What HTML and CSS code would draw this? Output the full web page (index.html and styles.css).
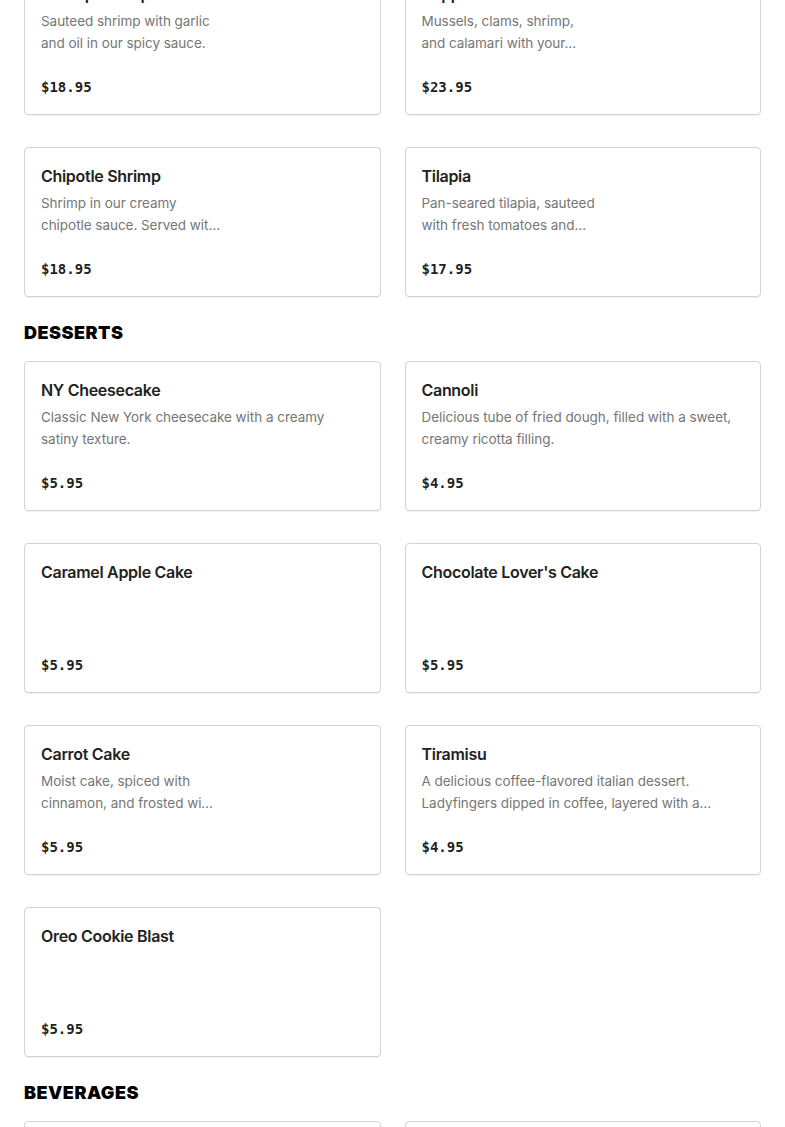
FILE: index.html
```html
<!DOCTYPE html>
<html lang="en">
<head>
<meta charset="utf-8">
<title>Menu</title>
<link rel="stylesheet" href="styles.css">
</head>
<body>
<main class="menu">
  <section class="section">
    <div class="grid">
      <article class="card">
        <h3 class="title">Shrimp Scampi</h3>
        <p class="desc"><span class="line">Sauteed shrimp with garlic</span><span class="line">and oil in our spicy sauce.</span></p>
        <div class="price">$18.95</div>
      </article>
      <article class="card">
        <h3 class="title">Zuppa di Pesce</h3>
        <p class="desc"><span class="line">Mussels, clams, shrimp,</span><span class="line">and calamari with your…</span></p>
        <div class="price">$23.95</div>
      </article>
      <article class="card">
        <h3 class="title">Chipotle Shrimp</h3>
        <p class="desc"><span class="line">Shrimp in our creamy</span><span class="line">chipotle sauce. Served wit…</span></p>
        <div class="price">$18.95</div>
      </article>
      <article class="card">
        <h3 class="title">Tilapia</h3>
        <p class="desc"><span class="line">Pan-seared tilapia, sauteed</span><span class="line">with fresh tomatoes and…</span></p>
        <div class="price">$17.95</div>
      </article>
    </div>
  </section>

  <section class="section">
    <h2 class="heading">DESSERTS</h2>
    <div class="grid">
      <article class="card">
        <h3 class="title">NY Cheesecake</h3>
        <p class="desc"><span class="line">Classic New York cheesecake with a creamy</span><span class="line">satiny texture.</span></p>
        <div class="price">$5.95</div>
      </article>
      <article class="card">
        <h3 class="title">Cannoli</h3>
        <p class="desc"><span class="line">Delicious tube of fried dough, filled with a sweet,</span><span class="line">creamy ricotta filling.</span></p>
        <div class="price">$4.95</div>
      </article>
      <article class="card">
        <h3 class="title">Caramel Apple Cake</h3>
        <p class="desc"></p>
        <div class="price">$5.95</div>
      </article>
      <article class="card">
        <h3 class="title">Chocolate Lover's Cake</h3>
        <p class="desc"></p>
        <div class="price">$5.95</div>
      </article>
      <article class="card">
        <h3 class="title">Carrot Cake</h3>
        <p class="desc"><span class="line">Moist cake, spiced with</span><span class="line">cinnamon, and frosted wi…</span></p>
        <div class="price">$5.95</div>
      </article>
      <article class="card">
        <h3 class="title">Tiramisu</h3>
        <p class="desc"><span class="line">A delicious coffee-flavored italian dessert.</span><span class="line">Ladyfingers dipped in coffee, layered with a…</span></p>
        <div class="price">$4.95</div>
      </article>
      <article class="card">
        <h3 class="title">Oreo Cookie Blast</h3>
        <p class="desc"></p>
        <div class="price">$5.95</div>
      </article>
    </div>
  </section>

  <section class="section">
    <h2 class="heading">BEVERAGES</h2>
    <div class="grid">
      <article class="card">
        <h3 class="title">Soda</h3>
        <p class="desc"></p>
        <div class="price">$2.95</div>
      </article>
      <article class="card">
        <h3 class="title">Iced Tea</h3>
        <p class="desc"></p>
        <div class="price">$2.95</div>
      </article>
    </div>
  </section>
</main>
</body>
</html>
```
FILE: styles.css
```css
* { box-sizing: border-box; }
html, body { margin: 0; padding: 0; background: #fff; }
body {
  font-family: "Inter", "Liberation Sans", sans-serif;
  color: #222;
}
.menu {
  padding: 0 24px;
  margin-top: -35px;
}
.grid {
  display: grid;
  grid-template-columns: 1fr 1fr;
  gap: 32px 24px;
}
.heading {
  margin: 24px 0 16px;
  font-family: "Inter", "Liberation Sans", sans-serif;
  font-weight: 900;
  font-size: 18px;
  line-height: 24px;
  letter-spacing: 0.5px;
  color: #000;
}
.card {
  height: 150px;
  border: 1px solid #d3d3d3;
  border-radius: 4px;
  padding: 16px;
  display: flex;
  flex-direction: column;
  box-shadow: 0 1px 1px rgba(0,0,0,0.06);
  overflow: hidden;
}
.title {
  margin: 0;
  font-family: "Inter", "Liberation Sans", sans-serif;
  font-weight: 600;
  font-size: 16px;
  line-height: 24px;
  color: #222;
  letter-spacing: -0.3px;
}
.desc {
  margin: 4px 0 0;
  height: 44px;
  font-family: "Inter", "Liberation Sans", sans-serif;
  font-size: 13.5px;
  line-height: 22px;
  letter-spacing: -0.04px;
  color: #767676;
}
.line {
  display: block;
  white-space: nowrap;
}
.price {
  margin-top: 22px;
  font-family: "DejaVu Sans Mono", "Liberation Mono", monospace;
  font-weight: 700;
  font-size: 14px;
  line-height: 22px;
  color: #1f1f1f;
}
```
